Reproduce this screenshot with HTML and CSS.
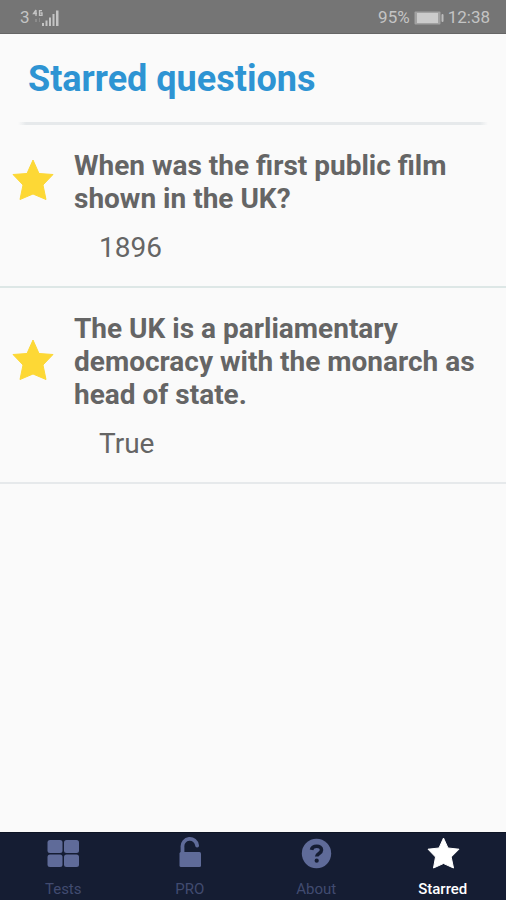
FILE: index.html
```html
<!DOCTYPE html>
<html lang="en">
<head>
<meta charset="utf-8">
<meta name="viewport" content="width=device-width, initial-scale=1">
<title>Starred questions</title>
<link rel="stylesheet" href="styles.css">
</head>
<body>
<div class="status">
  <div class="status-group">
    <span>3</span>
    <svg class="signal" width="28" height="18" viewBox="0 0 28 18" aria-hidden="true">
      <g fill="none" stroke="currentColor" stroke-width="1.3"><path d="M4 1 1.500 4.500H5M4 1v6M10 1.700H7.500v4.600H10V4H8.500"/></g>
      <path d="M10 14h2v3h-2zM13.500 11.500h2V17h-2zM17 8.500h2V17h-2zM20.500 5h2v12h-2zM24 1.500h2.500V17H24z" fill="currentColor"/>
      <path d="M3 10h2v3H3zM7 9h1v4H7z" fill="currentColor" opacity=".3"/>
    </svg>
  </div>
  <div class="status-group">
    <span>95%</span>
    <svg class="battery" width="30" height="14" viewBox="0 0 30 14" aria-hidden="true">
      <rect x=".5" y=".5" width="26" height="13" rx="1" fill="#a2a2a2"/>
      <rect x="3" y="2" width="21" height="10" fill="#cbcbcb"/>
      <rect x="27.500" y="3" width="2" height="8" rx="1" fill="#bdbdbd"/>
    </svg>
    <span>12:38</span>
  </div>
</div>
<header class="header">
  <h1>Starred questions</h1>
</header>
<main class="list">
  <article class="item">
    <button class="star" type="button" aria-label="Remove star">
      <svg width="42" height="42" viewBox="0 0 42 42" aria-hidden="true"><path d="M21 1 27 14.500 41 15.500 31 26 34 40.500 21 35 8 40.500 11 26 1 15.500 15 14.500Z" fill="#fdd835" stroke="#fdd835" stroke-linejoin="round"/></svg>
    </button>
    <h2>When was the first public film shown in the UK?</h2>
    <p>1896</p>
  </article>
  <article class="item">
    <button class="star" type="button" aria-label="Remove star">
      <svg width="42" height="42" viewBox="0 0 42 42" aria-hidden="true"><path d="M21 1 27 14.500 41 15.500 31 26 34 40.500 21 35 8 40.500 11 26 1 15.500 15 14.500Z" fill="#fdd835" stroke="#fdd835" stroke-linejoin="round"/></svg>
    </button>
    <h2>The UK is a parliamentary democracy with the monarch as head of state.</h2>
    <p>True</p>
  </article>
</main>
<nav class="tabs">
  <a class="tab" href="#tests">
    <svg width="34" height="34" viewBox="0 0 34 34" aria-hidden="true"><g fill="currentColor"><rect x="1.500" y="3" width="15" height="13" rx="2.500"/><rect x="18" y="3" width="15" height="13" rx="2.500"/><rect x="1.500" y="17.500" width="15" height="12.500" rx="2.500"/><rect x="18" y="17.500" width="15" height="12.500" rx="2.500"/></g></svg>
    <span>Tests</span>
  </a>
  <a class="tab" href="#pro">
    <svg width="34" height="34" viewBox="0 0 34 34" aria-hidden="true"><path d="M9.500 16V10a7.300 7.300 0 0 1 14.600-1.500" fill="none" stroke="currentColor" stroke-width="3.800" stroke-linecap="round"/><rect x="6.500" y="15" width="21.500" height="15" rx="1.500" fill="currentColor"/></svg>
    <span>PRO</span>
  </a>
  <a class="tab" href="#about">
    <svg width="34" height="34" viewBox="0 0 34 34" aria-hidden="true"><circle cx="17.500" cy="16.500" r="14.700" fill="currentColor"/><path d="M12.500 12.800c1-4.800 10-4.800 10 .2 0 3.600-4.800 3.200-4.800 6.600" fill="none" stroke="#151d33" stroke-width="3.600"/><circle cx="17.700" cy="23.700" r="2.100" fill="#151d33"/></svg>
    <span>About</span>
  </a>
  <a class="tab active" href="#starred" aria-current="page">
    <svg width="34" height="34" viewBox="0 0 34 34" aria-hidden="true"><path d="M17.500 1 22 11 33 12.200 25.200 20 27.500 31 17.500 26.500 7.500 31 9.500 20 2 12.200 13 11Z" fill="currentColor" stroke="currentColor" stroke-linejoin="round"/></svg>
    <span>Starred</span>
  </a>
</nav>
</body>
</html>
```
FILE: styles.css
```css
* {
  box-sizing: border-box;
}

body {
  margin: 0;
  min-height: 100vh;
  display: flex;
  flex-direction: column;
  background: #fafafa;
  color: #656565;
  font-family: Roboto, "Liberation Sans", sans-serif;
}

h1,
h2,
p {
  margin: 0;
}

.status {
  display: flex;
  justify-content: space-between;
  align-items: center;
  padding: 6px 16px 4px 20px;
  border-bottom: 1px solid #666;
  background: #757575;
  color: #c4c4c4;
  font-size: 17px;
  line-height: 23px;
}

.status-group {
  display: flex;
  align-items: center;
  gap: 4px;
}

.signal {
  margin-left: -2px;
}

.header {
  margin: 0 18px;
  padding: 25px 10px 23px;
  background: linear-gradient(90deg, transparent, #e6e9eb 8px, #e6e9eb calc(100% - 8px), transparent) bottom / 100% 3px no-repeat;
}

.header h1 {
  padding-bottom: 3px;
}

h1 {
  color: #2e94d3;
  font-size: 36px;
  font-weight: 700;
  line-height: 40px;
}

.item {
  display: grid;
  grid-template-columns: 42px 1fr;
  column-gap: 20px;
  row-gap: 16px;
  padding: 24px 12px 22px;
  border-bottom: 2px solid #dde7e6;
}

.item:last-child {
  border-bottom-color: #e6e9eb;
}

.star {
  align-self: center;
  padding: 0 0 4px;
  border: 0;
  background: none;
  cursor: pointer;
}

.star svg,
.tab svg {
  display: block;
}

h2,
.item p {
  font-size: 28px;
  line-height: 33px;
}

h2 {
  font-weight: 700;
}

.item p {
  grid-column: 2;
  padding-left: 25px;
}

.tabs {
  display: grid;
  grid-template-columns: repeat(4, 1fr);
  margin-top: auto;
  border-top: 1px solid #0d1425;
  background: #151d33;
}

.tab {
  display: flex;
  flex-direction: column;
  align-items: center;
  gap: 8px;
  padding: 4px 0 1px;
  color: #5f6b99;
  font-size: 15px;
  line-height: 20px;
  text-decoration: none;
}

.tab span {
  color: #414b70;
}

.tab.active,
.tab.active span {
  color: #fff;
  font-weight: 500;
}
```
